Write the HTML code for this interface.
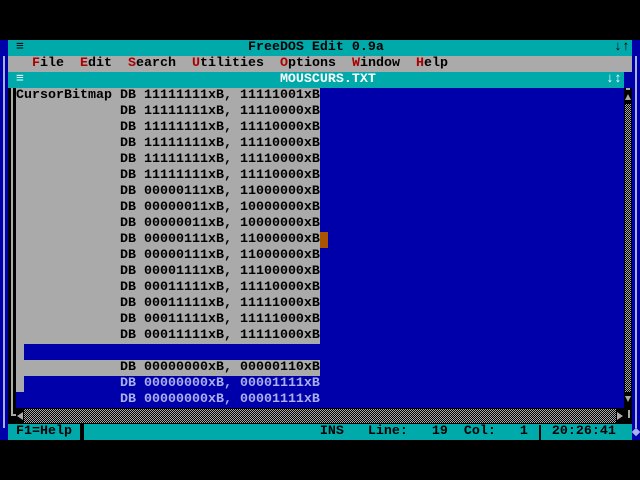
<!DOCTYPE html>
<html><head><style>
*{margin:0;padding:0;box-sizing:border-box}
body{width:640px;height:480px;background:#000;position:relative;overflow:hidden;font-family:"Liberation Mono",monospace;font-size:13.33px;font-weight:bold;line-height:16px}
.a{position:absolute;white-space:pre;height:16px}
.dith{background:repeating-conic-gradient(#aaa 0 25%,#000 0 50%) 0 0/2px 2px}
</style></head><body>
<div class="a" style="left:0;top:40px;width:640px;height:400px;background:#0000aa"></div>
<div class="a" style="left:3px;top:56px;width:2px;height:372px;background:#aab0ee"></div>
<div class="a" style="left:635px;top:56px;width:2px;height:372px;background:#aab0ee"></div>
<div class="a" style="left:8px;top:40px;width:624px;background:#00aaaa;color:#000"> ≡                            FreeDOS Edit 0.9a</div>
<div class="a" style="left:614px;top:40px;color:#000">↓↑</div>
<div class="a" style="left:8px;top:56px;width:624px;background:#aaa;color:#000">   <span style="color:#a00">F</span>ile  <span style="color:#a00">E</span>dit  <span style="color:#a00">S</span>earch  <span style="color:#a00">U</span>tilities  <span style="color:#a00">O</span>ptions  <span style="color:#a00">W</span>indow  <span style="color:#a00">H</span>elp</div>
<div class="a" style="left:8px;top:72px;width:616px;background:#00aaaa;color:#fff"> ≡                                MOUSCURS.TXT</div>
<div class="a" style="left:606px;top:72px;color:#fff">↓↕</div>
<div class="a" style="left:8px;top:88px;width:8px;height:336px;background:#000"></div>
<div class="a" style="left:11px;top:88px;width:2px;height:328px;background:#aaa"></div>
<div class="a" style="left:11px;top:414px;width:5px;height:2px;background:#aaa"></div>
<div class="a" style="left:16px;top:88px;width:304px;height:256px;background:#aaa"></div>
<div class="a" style="left:16px;top:344px;width:8px;background:#aaa"></div>
<div class="a" style="left:16px;top:360px;width:304px;background:#aaa"></div>
<div class="a" style="left:16px;top:376px;width:8px;background:#aaa"></div>
<div class="a" style="left:320px;top:232px;width:8px;background:#aa5500"></div>
<div class="a" style="left:16px;top:88px;color:#000">CursorBitmap DB 11111111xB, 11111001xB
             DB 11111111xB, 11110000xB
             DB 11111111xB, 11110000xB
             DB 11111111xB, 11110000xB
             DB 11111111xB, 11110000xB
             DB 11111111xB, 11110000xB
             DB 00000111xB, 11000000xB
             DB 00000011xB, 10000000xB
             DB 00000011xB, 10000000xB
             DB 00000111xB, 11000000xB
             DB 00000111xB, 11000000xB
             DB 00001111xB, 11100000xB
             DB 00011111xB, 11110000xB
             DB 00011111xB, 11111000xB
             DB 00011111xB, 11111000xB
             DB 00011111xB, 11111000xB

             DB 00000000xB, 00000110xB</div>
<div class="a" style="left:16px;top:376px;color:#aab0ee;height:32px">             DB 00000000xB, 00001111xB
             DB 00000000xB, 00001111xB</div>
<div class="a" style="left:624px;top:88px;width:8px;height:336px;background:#000"></div>
<div class="a dith" style="left:625px;top:104px;width:6px;height:288px"></div>
<div class="a" style="left:625px;top:94px;width:0;height:0;border-left:3px solid transparent;border-right:3px solid transparent;border-bottom:6px solid #aaa"></div>
<div class="a" style="left:625px;top:396px;width:0;height:0;border-left:3px solid transparent;border-right:3px solid transparent;border-top:6px solid #aaa"></div>
<div class="a" style="left:626px;top:88px;width:4px;height:2px;background:#aaa"></div>
<div class="a" style="left:16px;top:408px;width:608px;background:#000"></div>
<div class="a dith" style="left:24px;top:409px;width:592px;height:14px"></div>
<div class="a" style="left:17px;top:412px;width:0;height:0;border-top:4px solid transparent;border-bottom:4px solid transparent;border-right:6px solid #aaa"></div>
<div class="a" style="left:617px;top:412px;width:0;height:0;border-top:4px solid transparent;border-bottom:4px solid transparent;border-left:6px solid #aaa"></div>
<div class="a" style="left:628px;top:410px;width:2px;height:8px;background:#aaa"></div>
<div class="a" style="left:8px;top:424px;width:624px;background:#00aaaa;color:#000"> F1=Help                               INS   Line:   19  Col:   1   20:26:41</div>
<div class="a" style="left:80px;top:424px;width:4px;background:#000"></div>
<div class="a" style="left:539px;top:425px;width:2px;height:15px;background:#000"></div>
<div class="a" style="left:633px;top:429px;width:6px;height:6px;background:#aab0ee;transform:rotate(45deg)"></div>
</body></html>
